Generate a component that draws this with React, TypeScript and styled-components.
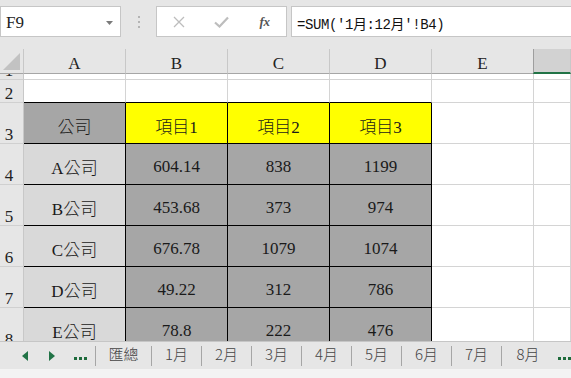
import styled, { createGlobalStyle } from 'styled-components';

const GlobalStyle = createGlobalStyle`
  html, body {
    margin: 0;
    padding: 0;
    background: #fff;
  }
  body {
    width: 571px;
    height: 378px;
    overflow: hidden;
  }
`;

type Tone = 'plain' | 'yellow' | 'dark' | 'light';

const toneBg: Record<Tone, string> = {
  plain: '#ffffff',
  yellow: '#ffff00',
  dark: '#a6a6a6',
  light: '#d9d9d9',
};

const COLUMNS = ['A', 'B', 'C', 'D', 'E'];

const TABLE = [
  ['公司', '項目1', '項目2', '項目3'],
  ['A公司', '604.14', '838', '1199'],
  ['B公司', '453.68', '373', '974'],
  ['C公司', '676.78', '1079', '1074'],
  ['D公司', '49.22', '312', '786'],
  ['E公司', '78.8', '222', '476'],
];

const SHEETS = ['1月', '2月', '3月', '4月', '5月', '6月', '7月', '8月'];

function toneFor(row: number, col: number): Tone {
  if (row === 0) return col === 0 ? 'dark' : 'yellow';
  return col === 0 ? 'light' : 'dark';
}

function Dots({ color }: { color: string }) {
  return (
    <svg width="13" height="3" viewBox="0 0 13 3">
      <rect x="0" y="0" width="3" height="3" fill={color} />
      <rect x="5" y="0" width="3" height="3" fill={color} />
      <rect x="10" y="0" width="3" height="3" fill={color} />
    </svg>
  );
}

function App() {
  return (
    <Page>
      <GlobalStyle />
      <FormulaBar>
        <NameBox>
          <NameText>F9</NameText>
          <svg width="7" height="4" viewBox="0 0 7 4">
            <path d="M0 0 H7 L3.5 4 Z" fill="#7a7a7a" />
          </svg>
        </NameBox>
        <Grip>
          <span />
          <span />
          <span />
        </Grip>
        <FnBox>
          <FnSlot>
            <svg width="12" height="12" viewBox="0 0 12 12">
              <path d="M1 1 L11 11 M11 1 L1 11" stroke="#bdbdbd" strokeWidth="1.3" fill="none" />
            </svg>
          </FnSlot>
          <FnSlot>
            <svg width="15" height="12" viewBox="0 0 15 12">
              <path d="M1 6.5 L5.5 10.5 L14 1.5" stroke="#bdbdbd" strokeWidth="2.2" fill="none" />
            </svg>
          </FnSlot>
          <FnSlot>
            <FxLabel>fx</FxLabel>
          </FnSlot>
        </FnBox>
        <FormulaInput>=SUM('1月:12月'!B4)</FormulaInput>
      </FormulaBar>

      <Sheet>
        <Corner />
        {COLUMNS.map((c) => (
          <ColHead key={c}>{c}</ColHead>
        ))}
        <ColHead $active />

        <RowHead>1</RowHead>
        {COLUMNS.map((c) => (
          <Cell key={c} $tone="plain" />
        ))}
        <Cell $tone="plain" />

        <RowHead>2</RowHead>
        {COLUMNS.map((c, i) => (
          <Cell key={c} $tone="plain" $inkBottom={i < 4} />
        ))}
        <Cell $tone="plain" />

        {TABLE.map((row, r) => [
          <RowHead key={`h${r}`}>{r + 3}</RowHead>,
          ...row.map((value, c) => (
            <Cell key={`${r}-${c}`} $tone={toneFor(r, c)} $inkRight $inkBottom>
              {value}
            </Cell>
          )),
          <Cell key={`${r}-e`} $tone="plain" />,
          <Cell key={`${r}-f`} $tone="plain" />,
        ])}
      </Sheet>

      <TabBar>
        <Nav>
          <svg width="6" height="10" viewBox="0 0 6 10">
            <path d="M6 0 V10 L0 5 Z" fill="#217346" />
          </svg>
          <svg width="6" height="10" viewBox="0 0 6 10">
            <path d="M0 0 V10 L6 5 Z" fill="#217346" />
          </svg>
          <MoreDots>
            <Dots color="#1e6b3c" />
          </MoreDots>
        </Nav>
        <Divider />
        <SheetTab $width={55}>匯總</SheetTab>
        {SHEETS.map((name, i) => [
          <Divider key={`d${name}`} />,
          <SheetTab key={name} $width={i === SHEETS.length - 1 ? 52 : 49}>
            {name}
          </SheetTab>,
        ])}
        <TailDots>
          <Dots color="#1e6b3c" />
        </TailDots>
      </TabBar>
      <StatusStrip />
    </Page>
  );
}

const Page = styled.div`
  display: flex;
  flex-direction: column;
  width: 571px;
  height: 378px;
  overflow: hidden;
  background: #e6e6e6;
`;

const FormulaBar = styled.div`
  display: flex;
  align-items: flex-start;
  height: 49px;
  padding-top: 6px;
  box-sizing: border-box;
  background: #e6e6e6;
`;

const Box = styled.div`
  display: flex;
  align-items: center;
  height: 31px;
  box-sizing: border-box;
  background: #fff;
  border: 1px solid #c6c6c6;
`;

const NameBox = styled(Box)`
  width: 121px;
  justify-content: space-between;
  padding: 2px 7px 0 5px;
`;

const NameText = styled.span`
  font: 17px "Liberation Serif", serif;
  color: #222;
`;

const Grip = styled.div`
  display: flex;
  flex-direction: column;
  align-items: center;
  gap: 3px;
  width: 35px;
  padding-top: 10px;
  box-sizing: border-box;

  span {
    width: 2px;
    height: 2px;
    background: #b4b4b4;
  }
`;

const FnBox = styled(Box)`
  display: grid;
  grid-template-columns: repeat(3, 1fr);
  width: 131px;
`;

const FnSlot = styled.div`
  display: flex;
  align-items: center;
  justify-content: center;
`;

const FxLabel = styled.span`
  font: italic 700 13px "Liberation Serif", serif;
  color: #555;
  letter-spacing: -0.5px;
`;

const FormulaInput = styled(Box)`
  flex: 1;
  margin-left: 4px;
  margin-right: -1px;
  padding: 2px 0 0 5px;
  font: 14px "Liberation Mono", "Noto Sans CJK TC", monospace;
  letter-spacing: -0.4px;
  color: #111;
  white-space: pre;
`;

const Sheet = styled.div`
  display: grid;
  grid-template-columns: 24px repeat(5, 102px) 1fr;
  grid-template-rows: 25px 6px 23px repeat(6, 41px);
  height: 292px;
  overflow: hidden;
  background: #fff;
`;

const Corner = styled.div`
  position: relative;
  background: #e6e6e6;
  border-right: 1px solid #c8c8c8;
  border-bottom: 1px solid #a6a6a6;

  &::after {
    content: '';
    position: absolute;
    right: 3px;
    bottom: 3px;
    width: 17px;
    height: 17px;
    background: #c2c2c2;
    clip-path: polygon(100% 0, 100% 100%, 0 100%);
  }
`;

const ColHead = styled.div<{ $active?: boolean }>`
  display: flex;
  align-items: center;
  justify-content: center;
  padding-top: 5px;
  box-sizing: border-box;
  background: ${(p) => (p.$active ? '#d2d2d2' : '#e6e6e6')};
  border-right: 1px solid #c8c8c8;
  border-left: ${(p) => (p.$active ? '1px solid #9e9e9e' : 'none')};
  margin-left: ${(p) => (p.$active ? '-1px' : '0')};
  border-bottom: ${(p) => (p.$active ? '2px solid #217346' : '1px solid #a6a6a6')};
  font: 17px "Liberation Serif", serif;
  color: #222;
`;

const RowHead = styled.div`
  display: flex;
  align-items: flex-end;
  justify-content: center;
  padding-right: 5px;
  box-sizing: border-box;
  overflow: hidden;
  background: #e6e6e6;
  border-right: 1px solid #c8c8c8;
  border-bottom: 1px solid #d0d0d0;
  font: 17px/1 "Liberation Serif", serif;
  color: #222;
`;

const Cell = styled.div<{ $tone: Tone; $inkRight?: boolean; $inkBottom?: boolean }>`
  display: flex;
  align-items: center;
  justify-content: center;
  padding-top: 5px;
  box-sizing: border-box;
  overflow: hidden;
  white-space: nowrap;
  background: ${(p) => toneBg[p.$tone]};
  border-right: 1px solid ${(p) => (p.$inkRight ? '#000' : '#d4d4d4')};
  border-bottom: 1px solid ${(p) => (p.$inkBottom ? '#000' : '#d4d4d4')};
  font: 300 17px "Liberation Serif", "Noto Sans CJK TC", serif;
  color: #1a1a1a;
`;

const TabBar = styled.div`
  display: flex;
  align-items: center;
  height: 28px;
  box-sizing: border-box;
  border-top: 1px solid #c6c6c6;
  background: #e6e6e6;
  overflow: hidden;
`;

const Nav = styled.div`
  display: flex;
  align-items: center;
  gap: 21px;
  width: 96px;
  height: 100%;
  padding-left: 22px;
  box-sizing: border-box;
`;

const MoreDots = styled.div`
  display: flex;
  margin-left: -2px;
  padding-top: 6px;
`;

const TailDots = styled.div`
  display: flex;
  padding: 6px 0 0 4px;
`;

const Divider = styled.div`
  flex: none;
  width: 1px;
  height: 20px;
  background: #a6a6a6;
`;

const SheetTab = styled.div<{ $width: number }>`
  flex: none;
  display: flex;
  align-items: center;
  justify-content: center;
  width: ${(p) => p.$width}px;
  padding-bottom: 4px;
  box-sizing: border-box;
  font: 300 15px "Noto Sans CJK TC", sans-serif;
  color: #444;
`;

const StatusStrip = styled.div`
  height: 9px;
  background: #f3f3f3;
`;

export default App;
